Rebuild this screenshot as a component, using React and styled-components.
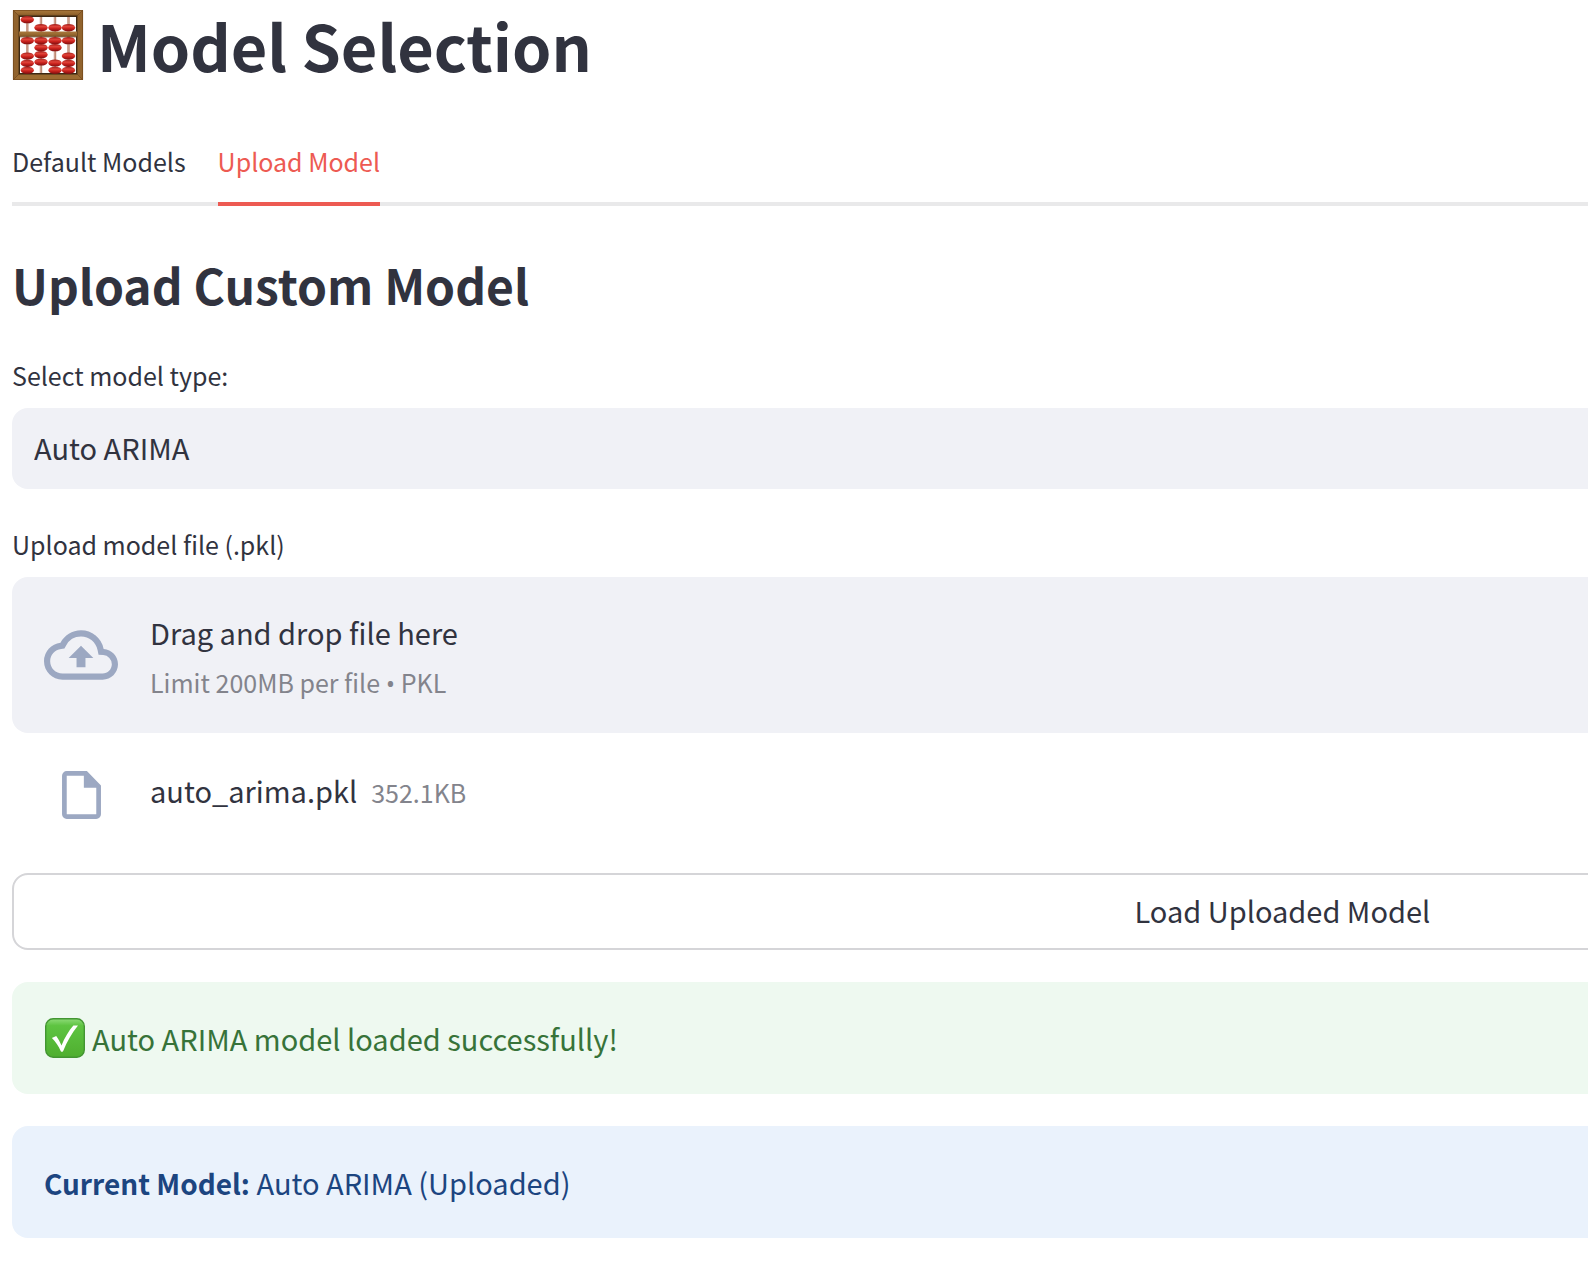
import React, { useState } from "react";
import styled, { createGlobalStyle } from "styled-components";

const color = {
  text: "#31333f",
  muted: "#83848c",
  accent: "#ed5a52",
  rule: "#e9e9ea",
  border: "#d5d5d8",
  field: "#f0f1f6",
  icon: "#9ca8c2",
};

const GlobalStyle = createGlobalStyle`
  *, *::before, *::after { box-sizing: border-box; }
  body {
    margin: 0;
    background: #ffffff;
    color: ${color.text};
    font-family: "Noto Sans CJK SC", "Noto Sans", sans-serif;
    font-size: 29px;
  }
  button, select, input { font: inherit; color: inherit; }
`;

const Viewport = styled.div`
  overflow-x: clip;
`;

const Page = styled.main`
  display: flex;
  flex-direction: column;
  width: 160vw;
  margin-left: 12px;
  padding-bottom: 24px;
`;

const Title = styled.h1`
  display: flex;
  align-items: center;
  gap: 13px;
  margin: 0;
  padding-top: 1px;
  font-size: 63px;
  font-weight: 700;
  line-height: 88px;
`;

const TabList = styled.div`
  display: flex;
  gap: 32px;
  margin-top: 33px;
  border-bottom: 4px solid ${color.rule};
`;

const Tab = styled.button`
  height: 84px;
  margin: 0 0 -4px;
  padding: 0 0 2px;
  border: 0;
  border-bottom: 4px solid ${(p) => (p.$active ? color.accent : "transparent")};
  background: none;
  color: ${(p) => (p.$active ? color.accent : color.text)};
  font-size: 25px;
  line-height: 40px;
  cursor: pointer;
`;

const Panel = styled.section`
  display: flex;
  flex-direction: column;
  gap: 32px;
  padding-top: 44px;
`;

const Heading = styled.h2`
  margin: 0;
  padding-bottom: 2px;
  font-size: 48px;
  font-weight: 700;
  line-height: 68px;
`;

const Field = styled.div`
  display: flex;
  flex-direction: column;
`;

const Label = styled.label`
  padding-bottom: 10px;
  font-size: 25px;
  line-height: 46px;
`;

const Select = styled.select`
  appearance: none;
  width: 100%;
  height: 81px;
  padding: 0 22px 4px;
  border: 0;
  border-radius: 16px;
  background: ${color.field};
`;

const Dropzone = styled.label`
  display: flex;
  align-items: center;
  gap: 32px;
  padding: 28px 32px;
  border-radius: 16px;
  background: ${color.field};
  cursor: pointer;
`;

const FileInput = styled.input`
  display: none;
`;

const DropText = styled.span`
  display: flex;
  flex-direction: column;
  gap: 4px;
  padding-top: 4px;
  line-height: 46px;
`;

const Muted = styled.span`
  color: ${color.muted};
  font-size: 25px;
`;

const Bullet = styled.span`
  font-family: "Open Sans", sans-serif;
  line-height: 1;
`;

const FileRow = styled.div`
  display: flex;
  gap: 32px;
  padding: 32px 32px 16px;
`;

const IconCell = styled.span`
  display: flex;
  align-items: center;
  justify-content: center;
  width: 74px;
  height: 60px;
`;

const FileName = styled.span`
  display: flex;
  align-items: baseline;
  gap: 14px;
  line-height: 50px;
`;

const Button = styled.button`
  width: 100%;
  height: 77px;
  padding: 0 0 4px;
  border: 2px solid ${color.border};
  border-radius: 16px;
  background: #ffffff;
  cursor: pointer;
`;

const tones = {
  success: { bg: "#eef9f0", fg: "#377339" },
  info: { bg: "#eaf2fc", fg: "#1c4580" },
};

const Alert = styled.div`
  display: flex;
  align-items: center;
  gap: 7px;
  padding: 32px;
  border-radius: 16px;
  background: ${(p) => tones[p.$tone].bg};
  color: ${(p) => tones[p.$tone].fg};
  line-height: 48px;
`;

const Strong = styled.strong`
  font-size: 28px;
  font-weight: 700;
  line-height: 1;
`;

const rods = [
  { x: 14.3, beads: [9.7, 30.7, 46, 53.3, 60.3] },
  { x: 28, beads: [17.7, 30.7, 37.7, 44.7, 52] },
  { x: 42, beads: [17.7, 30.7, 37.7, 53, 60.3] },
  { x: 55.5, beads: [17.7, 30.7, 46, 53.3, 60.3] },
];

function Abacus() {
  return (
    <svg width="72" height="70" viewBox="-1 0 72 70" role="img" aria-label="Abacus">
      <defs>
        <linearGradient id="bead" x1="0" y1="0" x2="0" y2="1">
          <stop offset="0" stopColor="#a3201c" />
          <stop offset="0.35" stopColor="#e0443a" />
          <stop offset="0.6" stopColor="#c9211c" />
          <stop offset="1" stopColor="#7d0f10" />
        </linearGradient>
        <linearGradient id="wood" x1="0" y1="0" x2="0" y2="1">
          <stop offset="0" stopColor="#a9783c" />
          <stop offset="0.5" stopColor="#996a31" />
          <stop offset="1" stopColor="#7c5122" />
        </linearGradient>
      </defs>
      <path d="M0 0H70V70H0ZM6.5 6.5V63.5H63.5V6.5Z" fill="#91632d" fillRule="evenodd" />
      <path d="M0 0H70L63.5 6.5H6.5Z" fill="url(#wood)" />
      <path d="M0 70H70L63.5 63.5H6.5Z" fill="#9c6c32" />
      <path d="M0.4 0.4H69.6V69.6H0.4Z" fill="none" stroke="#74491c" strokeWidth="0.8" />
      <path d="M0 0L6.5 6.5M70 0L63.5 6.5M0 70L6.5 63.5M70 70L63.5 63.5" stroke="#6d451c" strokeWidth="0.6" />
      <path d="M6.3 6.3H63.7V63.7H6.3Z" fill="none" stroke="#3c2813" strokeWidth="1.4" />
      {rods.map((rod) => (
        <g key={rod.x}>
          <path d={`M${rod.x} 7V63`} stroke="#b98570" strokeWidth="2.4" />
          <path d={`M${rod.x - 0.3} 7V63`} stroke="#dcb3a2" strokeWidth="0.8" />
        </g>
      ))}
      <rect x="6" y="21.5" width="58" height="5.2" fill="url(#wood)" />
      <path d="M6 26.9H64" stroke="#5c3b18" strokeWidth="0.8" />
      {rods.map((rod) =>
        rod.beads.map((y) => (
          <path
            key={`${rod.x}-${y}`}
            d={`M${rod.x - 6.8} ${y}C${rod.x - 6} ${y - 2.8} ${rod.x - 3.6} ${y - 3.6} ${rod.x} ${y - 3.6}S${rod.x + 6} ${y - 2.8} ${rod.x + 6.8} ${y}C${rod.x + 6} ${y + 2.8} ${rod.x + 3.6} ${y + 3.6} ${rod.x} ${y + 3.6}S${rod.x - 6} ${y + 2.8} ${rod.x - 6.8} ${y}Z`}
            fill="url(#bead)"
          />
        ))
      )}
    </svg>
  );
}

function CheckMark() {
  return (
    <svg width="41" height="40" viewBox="-1 0 41 40" role="img" aria-label="Done">
      <defs>
        <linearGradient id="tick" x1="0" y1="0" x2="0" y2="1">
          <stop offset="0" stopColor="#8edb78" />
          <stop offset="0.18" stopColor="#5ec441" />
          <stop offset="1" stopColor="#4fae30" />
        </linearGradient>
      </defs>
      <rect x="0.7" y="0.7" width="38.6" height="38.6" rx="7.5" fill="url(#tick)" stroke="#439632" strokeWidth="1.4" />
      <path d="M6.9 19.9L11.2 18C13.4 21 15 24 16.5 27.4C19.6 20 23.6 13 28.4 7.6H33C27 15 22 23.5 18.2 33Q17 34.6 15.8 33.2C13.6 28 10.8 23.8 6.9 19.9Z" fill="#ffffff" />
    </svg>
  );
}

function CloudUpload() {
  return (
    <svg width="74" height="74" viewBox="0 0 24 24" fill={color.icon} aria-hidden="true">
      <path d="M19.35 10.04A7.49 7.49 0 0012 4C9.11 4 6.6 5.64 5.35 8.04A5.994 5.994 0 000 14c0 3.31 2.69 6 6 6h13c2.76 0 5-2.24 5-5 0-2.64-2.05-4.78-4.65-4.96zM19 18H6c-2.21 0-4-1.79-4-4 0-2.05 1.53-3.76 3.56-3.97l1.07-.11.5-.95A5.469 5.469 0 0112 6c2.62 0 4.88 1.86 5.39 4.43l.3 1.5 1.53.11A2.98 2.98 0 0122 15c0 1.65-1.35 3-3 3zM8 13h2.55v3h2.9v-3H16l-4-4z" />
    </svg>
  );
}

function FileIcon() {
  return (
    <svg width="39" height="48" viewBox="0 0 116 143" fill={color.icon} aria-hidden="true">
      <path
        fillRule="evenodd"
        d="M14 0H74L116 43V129a14 14 0 0 1-14 14H14a14 14 0 0 1-14-14V14a14 14 0 0 1 14-14ZM14 14V129H102V50H65V14Z"
      />
    </svg>
  );
}

const tabs = ["Default Models", "Upload Model"];

export default function App() {
  const [active, setActive] = useState("Upload Model");
  return (
    <Viewport>
      <GlobalStyle />
      <Page>
        <Title>
          <Abacus />
          <span>Model Selection</span>
        </Title>
        <TabList role="tablist">
          {tabs.map((name) => (
            <Tab
              key={name}
              type="button"
              role="tab"
              aria-selected={name === active}
              $active={name === active}
              onClick={() => setActive(name)}
            >
              {name}
            </Tab>
          ))}
        </TabList>
        <Panel role="tabpanel">
          <Heading>Upload Custom Model</Heading>
          <Field>
            <Label htmlFor="model-type">Select model type:</Label>
            <Select id="model-type" defaultValue="Auto ARIMA">
              <option>Auto ARIMA</option>
            </Select>
          </Field>
          <Field>
            <Label htmlFor="model-file">Upload model file (.pkl)</Label>
            <Dropzone>
              <CloudUpload />
              <DropText>
                <span>Drag and drop file here</span>
                <Muted>
                  Limit 200MB per file <Bullet>•</Bullet> PKL
                </Muted>
              </DropText>
              <FileInput id="model-file" type="file" accept=".pkl" />
            </Dropzone>
            <FileRow>
              <IconCell>
                <FileIcon />
              </IconCell>
              <FileName>
                <span>auto_arima.pkl</span>
                <Muted>352.1KB</Muted>
              </FileName>
            </FileRow>
          </Field>
          <Button type="button">Load Uploaded Model</Button>
          <Alert $tone="success" role="status">
            <CheckMark />
            <span>Auto ARIMA model loaded successfully!</span>
          </Alert>
          <Alert $tone="info">
            <span>
              <Strong>Current Model:</Strong> Auto ARIMA (Uploaded)
            </span>
          </Alert>
        </Panel>
      </Page>
    </Viewport>
  );
}
